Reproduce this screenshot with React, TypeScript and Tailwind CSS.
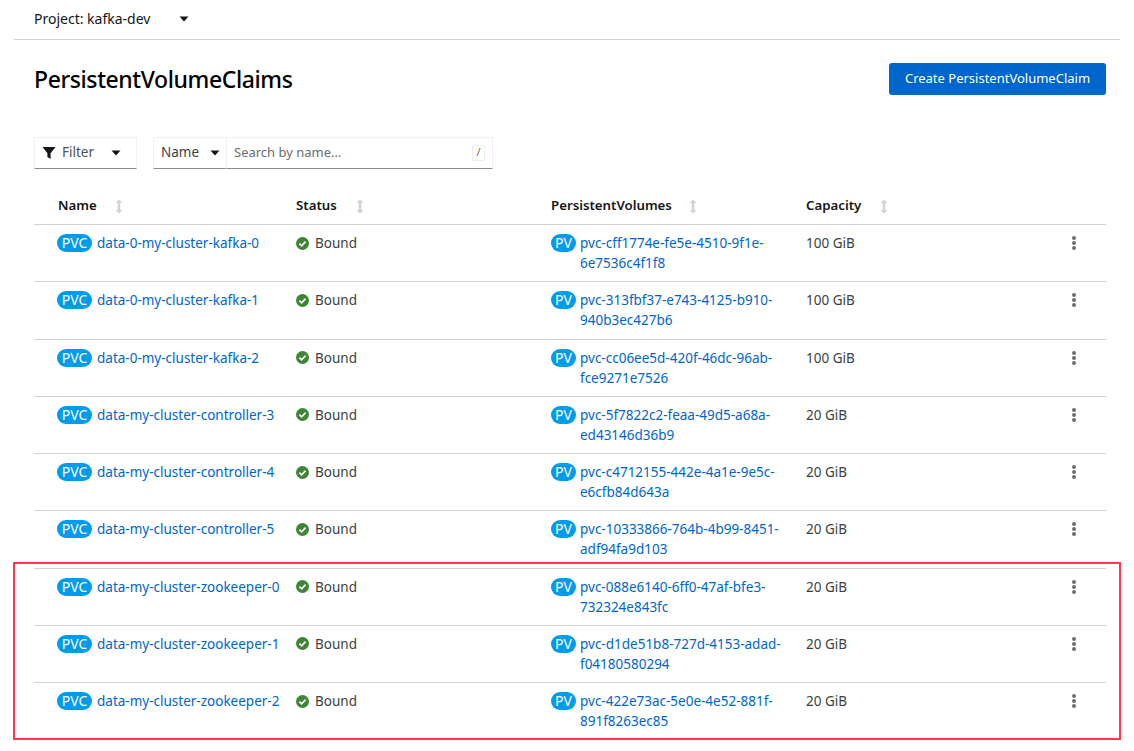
const rows = [
  { name: "data-0-my-cluster-kafka-0", pv: ["pvc-cff1774e-fe5e-4510-9f1e-", "6e7536c4f1f8"], cap: "100 GiB" },
  { name: "data-0-my-cluster-kafka-1", pv: ["pvc-313fbf37-e743-4125-b910-", "940b3ec427b6"], cap: "100 GiB" },
  { name: "data-0-my-cluster-kafka-2", pv: ["pvc-cc06ee5d-420f-46dc-96ab-", "fce9271e7526"], cap: "100 GiB" },
  { name: "data-my-cluster-controller-3", pv: ["pvc-5f7822c2-feaa-49d5-a68a-", "ed43146d36b9"], cap: "20 GiB" },
  { name: "data-my-cluster-controller-4", pv: ["pvc-c4712155-442e-4a1e-9e5c-", "e6cfb84d643a"], cap: "20 GiB" },
  { name: "data-my-cluster-controller-5", pv: ["pvc-10333866-764b-4b99-8451-", "adf94fa9d103"], cap: "20 GiB" },
  { name: "data-my-cluster-zookeeper-0", pv: ["pvc-088e6140-6ff0-47af-bfe3-", "732324e843fc"], cap: "20 GiB" },
  { name: "data-my-cluster-zookeeper-1", pv: ["pvc-d1de51b8-727d-4153-adad-", "f04180580294"], cap: "20 GiB" },
  { name: "data-my-cluster-zookeeper-2", pv: ["pvc-422e73ac-5e0e-4e52-881f-", "891f8263ec85"], cap: "20 GiB" },
];

function Caret() {
  return (
    <svg width="10" height="6" viewBox="0 0 10 6" className="block">
      <path d="M0.5 0.5h9L5 5.5z" fill="#151515" />
    </svg>
  );
}

function SortIcon() {
  return (
    <svg width="8" height="15" viewBox="0 0 8 15" className="block">
      <path d="M4 0.5L7.5 4H5.2v7H7.5L4 14.5 0.5 11h2.3V4H0.5z" fill="#d2d2d2" />
    </svg>
  );
}

function Badge({ label, wide }: { label: string; wide?: boolean }) {
  return (
    <span
      className={`inline-flex h-[18px] items-center justify-center rounded-full bg-[#009ceb] text-[14px] leading-none text-white shrink-0 ${
        wide ? "w-[35px] -ml-px" : "w-[25px]"
      }`}
    >
      {label}
    </span>
  );
}

function HeadCell({ label, className, gap }: { label: string; className: string; gap: string }) {
  return (
    <div className={`flex items-center ${className}`}>
      <span className="text-[13.25px] font-semibold text-[#151515]">{label}</span>
      <span className={gap}>
        <SortIcon />
      </span>
    </div>
  );
}

export default function App() {
  return (
    <div
      className="relative h-[751px] w-[1134px] overflow-hidden bg-white text-[13.5px] text-[#151515]"
      style={{ fontFamily: '"Noto Sans", sans-serif' }}
    >
      <div className="ml-[14px] mr-[14px] flex h-[40px] items-center border-b border-[#d2d2d2] pb-[2px] pl-[20px]">
        <span className="text-[14px]">Project: kafka-dev</span>
        <span className="ml-[29px]">
          <Caret />
        </span>
      </div>

      <div className="ml-[34px] mr-[28px]">
        <div className="mt-[23px] flex h-[32px] items-center justify-between">
          <h1 className="text-[23px] leading-none font-medium tracking-[-0.4px] text-black">PersistentVolumeClaims</h1>
          <button className="flex h-[32px] w-[217px] items-center justify-center rounded-[3px] bg-[#06c] text-[13px] text-white">
            Create PersistentVolumeClaim
          </button>
        </div>

        <div className="mt-[42px] flex h-[32px]">
          <div className="flex w-[103px] items-center border border-[#f0f0f0] border-b-[#8a8d90] pb-[1px] pl-[7px]">
            <svg width="14" height="14" viewBox="0 0 14 14" className="block">
              <path d="M0.5 1h13L8.6 7.2V13L5.4 11V7.2z" fill="#151515" />
            </svg>
            <span className="ml-[6px] text-[#4f5255]">Filter</span>
            <span className="ml-[17px]">
              <Caret />
            </span>
          </div>
          <div className="ml-[16px] flex w-[74px] items-center border border-[#f0f0f0] border-b-[#8a8d90] pb-[1px] pl-[7px]">
            <span className="text-[#3c3f42]">Name</span>
            <span className="ml-[11px]">
              <Caret />
            </span>
          </div>
          <div className="flex w-[266px] items-center justify-between border border-l-0 border-[#f0f0f0] border-b-[#8a8d90] pb-[1px] pl-[7px] pr-[7px]">
            <span className="text-[13px] text-[#6a6e73]">Search by name...</span>
            <span className="flex h-[16px] w-[13px] items-center justify-center rounded-[2px] border border-[#ededed] text-[11px] text-[#6a6e73]">
              /
            </span>
          </div>
        </div>

        <div className="mt-[15px] flex h-[41px] items-center border-b border-[#d2d2d2] pl-[24px] pt-[4px]">
          <HeadCell label="Name" className="w-[238px]" gap="ml-[18px]" />
          <HeadCell label="Status" className="w-[255px]" gap="ml-[19px]" />
          <HeadCell label="PersistentVolumes" className="w-[255px]" gap="ml-[17px]" />
          <HeadCell label="Capacity" className="w-[255px]" gap="ml-[19px]" />
        </div>

        {rows.map((row) => (
          <div key={row.name} className="flex h-[57.25px] border-b border-[#d2d2d2] pl-[24px] pt-[8px] leading-[20px]">
            <div className="flex h-[20px] w-[238px] items-center gap-[5px]">
              <Badge label="PVC" wide />
              <a className="whitespace-nowrap text-[#06c]">{row.name}</a>
            </div>
            <div className="flex h-[20px] w-[255px] items-center gap-[6px]">
              <svg width="13" height="13" viewBox="0 0 13 13" className="block shrink-0">
                <circle cx="6.5" cy="6.5" r="6.5" fill="#3e8635" />
                <path d="M3.4 6.7l2.2 2.2 4-4.2" fill="none" stroke="#fff" strokeWidth="1.7" />
              </svg>
              <span className="text-[#3c3f42]">Bound</span>
            </div>
            <div className="flex w-[255px] gap-[4px]">
              <span className="flex h-[20px] items-center">
                <Badge label="PV" />
              </span>
              <a className="whitespace-nowrap text-[#06c]">
                {row.pv[0]}
                <br />
                {row.pv[1]}
              </a>
            </div>
            <div className="h-[20px] w-[266px] text-[#3c3f42]">{row.cap}</div>
            <div className="flex h-[20px] flex-col items-center justify-center gap-[1px]">
              <span className="h-[4px] w-[4px] rounded-full bg-[#6a6e73]" />
              <span className="h-[4px] w-[4px] rounded-full bg-[#6a6e73]" />
              <span className="h-[4px] w-[4px] rounded-full bg-[#6a6e73]" />
            </div>
          </div>
        ))}
      </div>

      <div className="absolute left-[13px] top-[562px] h-[178px] w-[1108px] border-2 border-[#f93a52]" />
    </div>
  );
}
